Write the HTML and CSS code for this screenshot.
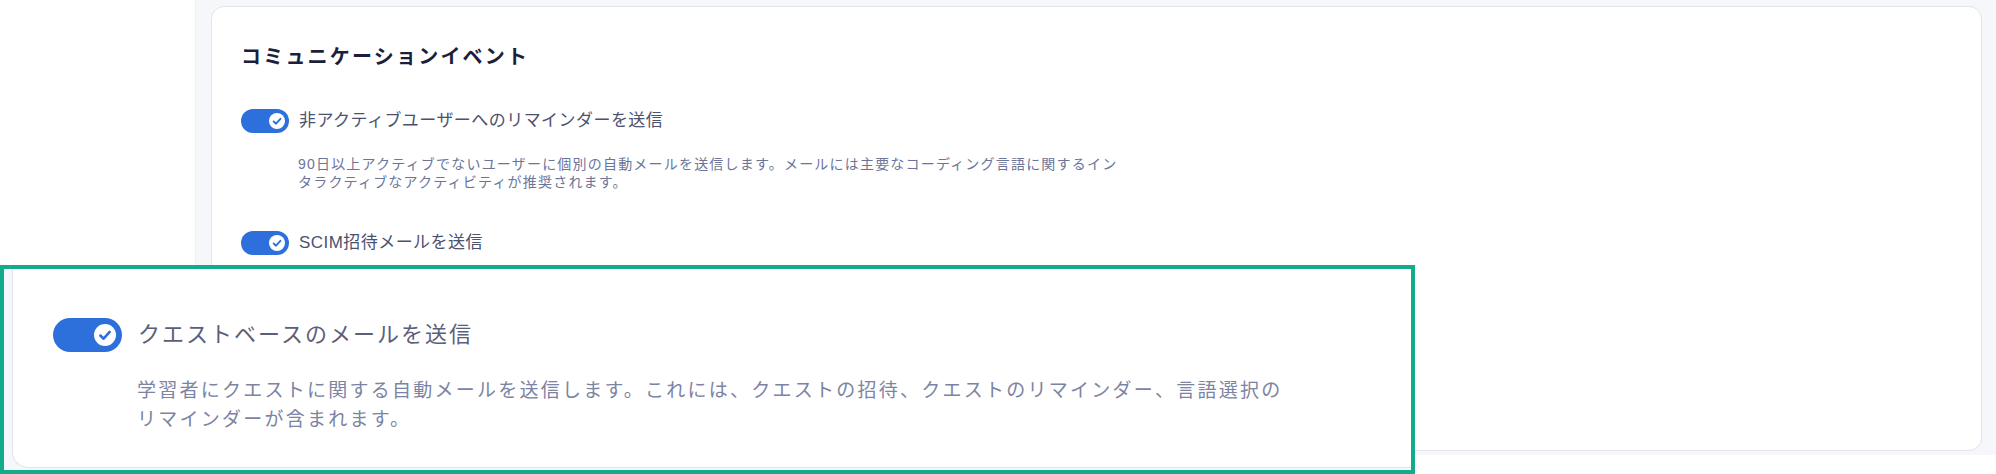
FILE: index.html
```html
<!DOCTYPE html>
<html lang="ja">
<head>
<meta charset="utf-8">
<title>コミュニケーションイベント</title>
<link rel="stylesheet" href="styles.css">
</head>
<body>
<div class="app">
  <aside class="sidebar"></aside>
  <main class="main">
    <section class="card">
      <h2 class="card-title">コミュニケーションイベント</h2>
      <div class="settings">
        <div class="setting">
          <div class="setting-row">
            <span class="toggle"><span class="knob"><svg viewBox="0 0 16 16"><path d="M4.6 8.4 L7 10.7 L11.4 5.8"/></svg></span></span>
            <span class="label">非アクティブユーザーへのリマインダーを送信</span>
          </div>
          <p class="desc">90日以上アクティブでないユーザーに個別の自動メールを送信します。メールには主要なコーディング言語に関するインタラクティブなアクティビティが推奨されます。</p>
        </div>
        <div class="setting">
          <div class="setting-row">
            <span class="toggle"><span class="knob"><svg viewBox="0 0 16 16"><path d="M4.6 8.4 L7 10.7 L11.4 5.8"/></svg></span></span>
            <span class="label">SCIM招待メールを送信</span>
          </div>
        </div>
      </div>
    </section>
  </main>
</div>
<div class="magnifier">
  <div class="mag-card">
    <div class="setting setting--large">
      <div class="setting-row">
        <span class="toggle"><span class="knob"><svg viewBox="0 0 16 16"><path d="M4.6 8.4 L7 10.7 L11.4 5.8"/></svg></span></span>
        <span class="label">クエストベースのメールを送信</span>
      </div>
      <p class="desc">学習者にクエストに関する自動メールを送信します。これには、クエストの招待、クエストのリマインダー、言語選択のリマインダーが含まれます。</p>
    </div>
  </div>
</div>
</body>
</html>
```
FILE: styles.css
```css
* { box-sizing: border-box; }
html, body {
  margin: 0;
  padding: 0;
  background: #ffffff;
  font-family: "Liberation Sans", "Noto Sans CJK JP", sans-serif;
}
.app {
  display: flex;
  width: 1996px;
}
.sidebar {
  width: 195px;
  flex: 0 0 195px;
  background: #ffffff;
}
.main {
  flex: 1;
  background: #f6f7fb;
  padding: 6px 14px 4px 15px;
  border-left: 1px solid #eef0f6;
}
.card {
  height: 445px;
  background: #ffffff;
  border: 1px solid #e1e4ef;
  border-radius: 13px;
  padding: 35px 29px 0 29px;
}
.card-title {
  margin: 0;
  font-family: "Noto Sans CJK JP", sans-serif;
  font-size: 20px;
  line-height: 28px;
  font-weight: 700;
  letter-spacing: 2.2px;
  color: #1b1f3b;
}
.settings {
  display: flex;
  flex-direction: column;
  gap: 40px;
  margin-top: 39px;
}
.setting-row {
  display: flex;
  align-items: center;
  gap: 10px;
}
.toggle {
  width: 48px;
  height: 24px;
  flex: 0 0 48px;
  border-radius: 12px;
  background: #2d6fdb;
  display: flex;
  align-items: center;
  justify-content: flex-end;
  padding-right: 4px;
}
.knob {
  width: 16px;
  height: 16px;
  border-radius: 50%;
  background: #ffffff;
  display: flex;
}
.knob svg {
  width: 100%;
  height: 100%;
  fill: none;
  stroke: #2d6fdb;
  stroke-width: 1.9;
  stroke-linecap: round;
  stroke-linejoin: round;
}
.label {
  font-size: 17px;
  line-height: 24px;
  letter-spacing: 0.45px;
  color: #4b5270;
}
.desc {
  margin: 22px 0 0 0;
  padding-left: 57px;
  max-width: 887px;
  font-size: 14px;
  line-height: 18px;
  letter-spacing: 1.2px;
  color: #6c7599;
}

.magnifier {
  position: absolute;
  left: 0;
  top: 265px;
  width: 1415px;
  height: 209px;
  border: 4px solid #12ac8c;
  background: #f6f7fb;
  padding-left: 8px;
  padding-bottom: 2px;
  display: flex;
}
.mag-card {
  flex: 1;
  background: #ffffff;
  border-left: 1px solid #e1e4ef;
  border-bottom: 1px solid #e1e4ef;
  border-bottom-left-radius: 16px;
  padding: 49px 0 0 40px;
}
.setting--large .setting-row { gap: 16px; }
.setting--large .toggle {
  width: 69px;
  height: 34px;
  flex: 0 0 69px;
  border-radius: 17px;
  padding-right: 6px;
}
.setting--large .knob {
  width: 22px;
  height: 22px;
}
.setting--large .label {
  font-size: 22px;
  line-height: 34px;
  letter-spacing: 2px;
  color: #5b6079;
}
.setting--large .desc {
  margin-top: 24px;
  padding-left: 84px;
  max-width: 1250px;
  font-size: 19px;
  line-height: 29px;
  letter-spacing: 2.25px;
  color: #7c84a3;
}
```
